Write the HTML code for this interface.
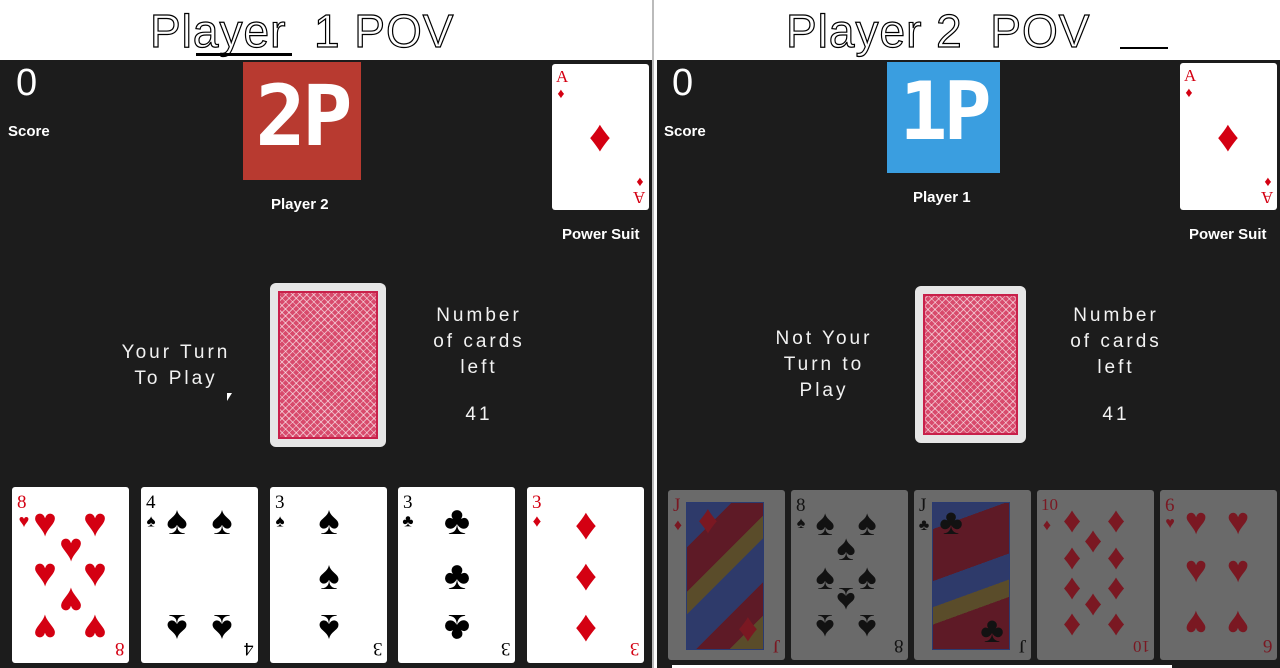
<!DOCTYPE html>
<html><head><meta charset="utf-8"><style>
*{margin:0;padding:0;box-sizing:border-box}
body{width:1280px;height:668px;background:#fff;position:relative;overflow:hidden;font-family:"Liberation Sans","DejaVu Sans",sans-serif}
.a{position:absolute}
.panel{position:absolute;top:60px;height:608px;background:#1c1c1c}
.title{position:absolute;top:4px;font-size:46px;color:#fff;-webkit-text-stroke:1.2px #000;letter-spacing:1px;white-space:nowrap}
.zero{position:absolute;top:62px;font-size:38px;color:#fff;font-weight:300}
.lbl{position:absolute;font-size:15px;font-weight:bold;color:#fff;white-space:nowrap}
.thin{position:absolute;color:#f2f2f2;font-size:19px;letter-spacing:3px;line-height:26px;text-align:center;white-space:nowrap}
.card{position:absolute;background:#fff;border-radius:3px;overflow:hidden}
.card span{position:absolute;transform:translate(-50%,-50%);line-height:1}
.r{color:#d40012}.k{color:#000}
.rk{position:absolute;font-size:19px;line-height:1;font-family:"Liberation Serif",serif}
.dim{background:#6a6a6a}
.dim .r{color:#7a1822}.dim .k{color:#121212}
.back{position:absolute;background:#e6e6e6;border-radius:6px}
.back div{position:absolute;left:8px;top:8px;right:8px;bottom:8px;border:2px solid #c8204a;background-color:#d84a6c;background-image:repeating-linear-gradient(45deg,transparent 0 4px,rgba(255,255,255,.55) 4px 5px),repeating-linear-gradient(-45deg,transparent 0 4px,rgba(255,255,255,.55) 4px 5px)}
.face{position:absolute;left:18px;top:12px;width:78px;height:148px;border:1px solid #2a3a70;background:linear-gradient(135deg,#2e3a6a 0 20%,#5e1a26 20% 40%,#5a4c2a 40% 50%,#2e3a6a 50% 70%,#5e1a26 70% 85%,#5a4c2a 85%)}
</style></head><body>

<div class="title" style="left:150px">Player&nbsp; 1 POV</div>
<div class="title" style="left:786px">Player 2&nbsp; POV</div>
<div class="a" style="left:196px;top:53px;width:96px;height:3px;background:#000"></div>
<div class="a" style="left:1120px;top:47px;width:48px;height:2px;background:#000"></div>

<div class="panel" style="left:0;width:652px"></div>
<div class="a" style="left:652px;top:0;width:2px;height:668px;background:#bbb"></div>
<div class="zero" style="left:16px">0</div>
<div class="lbl" style="left:8px;top:123px">Score</div>
<div class="a" style="left:243px;top:62px;width:118px;height:118px;background:#b83a30"></div>
<div class="a" style="left:243px;top:74px;width:118px;text-align:center;color:#fff;font:bold 84px/1 'DejaVu Sans Mono',monospace;letter-spacing:-4px">2P</div>
<div class="lbl" style="left:271px;top:196px">Player 2</div>
<div class="card" style="left:552px;top:64px;width:97px;height:146px">
 <div class="rk r" style="left:4px;top:4px;font-size:17px">A</div><span class="r" style="left:9px;top:29px;font-size:14px">♦</span>
 <span class="r" style="left:48px;top:73px;font-size:44px">♦</span>
 <div class="rk r" style="right:4px;bottom:4px;font-size:17px;transform:rotate(180deg)">A</div><span class="r" style="left:88px;top:117px;font-size:14px">♦</span>
</div>
<div class="lbl" style="left:562px;top:226px">Power Suit</div>
<div class="thin" style="left:106px;top:340px;width:140px">Your Turn<br>To Play</div>
<div class="a" style="left:227px;top:393px;width:0;height:0;border-left:5px solid #fff;border-bottom:8px solid transparent"></div>
<div class="back" style="left:270px;top:283px;width:116px;height:164px"><div></div></div>
<div class="thin" style="left:409px;top:303px;width:140px">Number<br>of cards<br>left</div>
<div class="thin" style="left:409px;top:402px;width:140px">41</div>

<div class="card" style="left:12px;top:487px;width:117px;height:176px;font-size:40px">
 <div class="rk r" style="left:5px;top:6px">8</div><span class="r" style="left:12px;top:34px;font-size:18px">♥</span>
 <span class="r" style="left:33px;top:36px">♥</span><span class="r" style="left:83px;top:36px">♥</span>
 <span class="r" style="left:59px;top:61px">♥</span>
 <span class="r" style="left:33px;top:86px">♥</span><span class="r" style="left:83px;top:86px">♥</span>
 <span class="r" style="left:59px;top:114px;transform:translate(-50%,-50%) rotate(180deg)">♥</span>
 <span class="r" style="left:33px;top:141px;transform:translate(-50%,-50%) rotate(180deg)">♥</span><span class="r" style="left:83px;top:141px;transform:translate(-50%,-50%) rotate(180deg)">♥</span>
 <div class="rk r" style="right:5px;bottom:5px;transform:rotate(180deg)">8</div>
</div>
<div class="card" style="left:141px;top:487px;width:117px;height:176px;font-size:40px">
 <div class="rk k" style="left:5px;top:6px">4</div><span class="k" style="left:10px;top:34px;font-size:17px">♠</span>
 <span class="k" style="left:36px;top:34px">♠</span><span class="k" style="left:81px;top:34px">♠</span>
 <span class="k" style="left:36px;top:141px;transform:translate(-50%,-50%) rotate(180deg)">♠</span><span class="k" style="left:81px;top:141px;transform:translate(-50%,-50%) rotate(180deg)">♠</span>
 <div class="rk k" style="right:5px;bottom:5px;transform:rotate(180deg)">4</div>
</div>
<div class="card" style="left:270px;top:487px;width:117px;height:176px;font-size:40px">
 <div class="rk k" style="left:5px;top:6px">3</div><span class="k" style="left:10px;top:34px;font-size:17px">♠</span>
 <span class="k" style="left:59px;top:34px">♠</span><span class="k" style="left:59px;top:89px">♠</span>
 <span class="k" style="left:59px;top:141px;transform:translate(-50%,-50%) rotate(180deg)">♠</span>
 <div class="rk k" style="right:5px;bottom:5px;transform:rotate(180deg)">3</div>
</div>
<div class="card" style="left:398px;top:487px;width:117px;height:176px;font-size:40px">
 <div class="rk k" style="left:5px;top:6px">3</div><span class="k" style="left:10px;top:34px;font-size:17px">♣</span>
 <span class="k" style="left:59px;top:34px">♣</span><span class="k" style="left:59px;top:89px">♣</span>
 <span class="k" style="left:59px;top:141px;transform:translate(-50%,-50%) rotate(180deg)">♣</span>
 <div class="rk k" style="right:5px;bottom:5px;transform:rotate(180deg)">3</div>
</div>
<div class="card" style="left:527px;top:487px;width:117px;height:176px;font-size:44px">
 <div class="rk r" style="left:5px;top:6px">3</div><span class="r" style="left:10px;top:34px;font-size:17px">♦</span>
 <span class="r" style="left:59px;top:38px">♦</span><span class="r" style="left:59px;top:89px">♦</span><span class="r" style="left:59px;top:140px">♦</span>
 <div class="rk r" style="right:5px;bottom:5px;transform:rotate(180deg)">3</div>
</div>

<div class="panel" style="left:657px;width:623px"></div>
<div class="zero" style="left:672px">0</div>
<div class="lbl" style="left:664px;top:123px">Score</div>
<div class="a" style="left:887px;top:62px;width:113px;height:111px;background:#3a9ee0"></div>
<div class="a" style="left:887px;top:72px;width:113px;text-align:center;color:#fff;font:bold 80px/1 'DejaVu Sans Mono',monospace;letter-spacing:-4px">1P</div>
<div class="lbl" style="left:913px;top:189px">Player 1</div>
<div class="card" style="left:1180px;top:63px;width:97px;height:147px">
 <div class="rk r" style="left:4px;top:4px;font-size:17px">A</div><span class="r" style="left:9px;top:29px;font-size:14px">♦</span>
 <span class="r" style="left:48px;top:74px;font-size:44px">♦</span>
 <div class="rk r" style="right:4px;bottom:4px;font-size:17px;transform:rotate(180deg)">A</div><span class="r" style="left:88px;top:118px;font-size:14px">♦</span>
</div>
<div class="lbl" style="left:1189px;top:226px">Power Suit</div>
<div class="thin" style="left:754px;top:326px;width:140px">Not Your<br>Turn to<br>Play</div>
<div class="back" style="left:915px;top:286px;width:111px;height:157px"><div></div></div>
<div class="thin" style="left:1046px;top:303px;width:140px">Number<br>of cards<br>left</div>
<div class="thin" style="left:1046px;top:402px;width:140px">41</div>

<div class="card dim" style="left:668px;top:490px;width:117px;height:170px;font-size:40px">
 <div class="face"></div>
 <div class="rk r" style="left:5px;top:6px">J</div><span class="r" style="left:10px;top:36px;font-size:16px">♦</span>
 <span class="r" style="left:40px;top:30px">♦</span><span class="r" style="left:80px;top:138px">♦</span>
 <div class="rk r" style="right:5px;bottom:5px;transform:rotate(180deg)">J</div>
</div>
<div class="card dim" style="left:791px;top:490px;width:117px;height:170px;font-size:36px">
 <div class="rk k" style="left:5px;top:6px">8</div><span class="k" style="left:10px;top:34px;font-size:16px">♠</span>
 <span class="k" style="left:34px;top:33px">♠</span><span class="k" style="left:76px;top:33px">♠</span>
 <span class="k" style="left:55px;top:58px">♠</span>
 <span class="k" style="left:34px;top:87px">♠</span><span class="k" style="left:76px;top:87px">♠</span>
 <span class="k" style="left:55px;top:110px;transform:translate(-50%,-50%) rotate(180deg)">♠</span>
 <span class="k" style="left:34px;top:137px;transform:translate(-50%,-50%) rotate(180deg)">♠</span><span class="k" style="left:76px;top:137px;transform:translate(-50%,-50%) rotate(180deg)">♠</span>
 <div class="rk k" style="right:5px;bottom:5px;transform:rotate(180deg)">8</div>
</div>
<div class="card dim" style="left:914px;top:490px;width:117px;height:170px;font-size:36px">
 <div class="face" style="background:linear-gradient(160deg,#2e3a6a 0 15%,#5e1a26 15% 45%,#2e3a6a 45% 60%,#5a4c2a 60% 70%,#5e1a26 70%)"></div>
 <div class="rk k" style="left:5px;top:6px">J</div><span class="k" style="left:10px;top:36px;font-size:16px">♣</span>
 <span class="k" style="left:37px;top:32px">♣</span><span class="k" style="left:78px;top:140px">♣</span>
 <div class="rk k" style="right:5px;bottom:5px;transform:rotate(180deg)">J</div>
</div>
<div class="card dim" style="left:1037px;top:490px;width:117px;height:170px;font-size:36px">
 <div class="rk r" style="left:4px;top:6px;font-size:17px">10</div><span class="r" style="left:10px;top:36px;font-size:16px">♦</span>
 <span class="r" style="left:35px;top:30px">♦</span><span class="r" style="left:79px;top:30px">♦</span>
 <span class="r" style="left:56px;top:50px">♦</span>
 <span class="r" style="left:35px;top:67px">♦</span><span class="r" style="left:79px;top:67px">♦</span>
 <span class="r" style="left:35px;top:97px">♦</span><span class="r" style="left:79px;top:97px">♦</span>
 <span class="r" style="left:56px;top:113px">♦</span>
 <span class="r" style="left:35px;top:133px">♦</span><span class="r" style="left:79px;top:133px">♦</span>
 <div class="rk r" style="right:4px;bottom:5px;font-size:17px;transform:rotate(180deg)">10</div>
</div>
<div class="card dim" style="left:1160px;top:490px;width:117px;height:170px;font-size:38px">
 <div class="rk r" style="left:5px;top:6px">6</div><span class="r" style="left:10px;top:34px;font-size:16px">♥</span>
 <span class="r" style="left:36px;top:32px">♥</span><span class="r" style="left:78px;top:32px">♥</span>
 <span class="r" style="left:36px;top:80px">♥</span><span class="r" style="left:78px;top:80px">♥</span>
 <span class="r" style="left:36px;top:133px;transform:translate(-50%,-50%) rotate(180deg)">♥</span><span class="r" style="left:78px;top:133px;transform:translate(-50%,-50%) rotate(180deg)">♥</span>
 <div class="rk r" style="right:5px;bottom:5px;transform:rotate(180deg)">6</div>
</div>
<div class="a" style="left:672px;top:665px;width:500px;height:3px;background:#fff"></div>
</body></html>
